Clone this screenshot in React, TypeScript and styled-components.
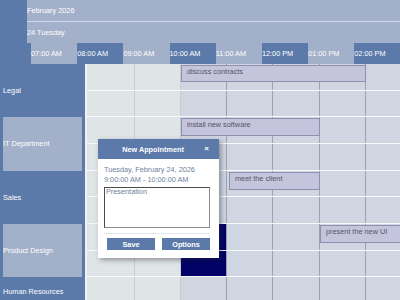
import React from "react";
import styled, { createGlobalStyle } from "styled-components";

const DARK = "#5b7aa9";
const LIGHT = "#a3b0c9";
const FONT = `"Liberation Sans", Arial, sans-serif`;

const Global = createGlobalStyle`
  html, body { margin: 0; padding: 0; background: #ffffff; }
  body { font-family: ${FONT}; }
  * { box-sizing: border-box; }
`;

const Scheduler = styled.div`
  position: relative;
  width: 400px;
  height: 300px;
  overflow: hidden;
  font-family: ${FONT};
  font-size: 7.3px;
  background: ${DARK};
  color: #ffffff;
`;

const Header = styled.div`
  display: flex;
  flex-direction: column;
`;

const HeaderRow = styled.div`
  display: flex;
  padding-left: 27px;
  background: ${DARK};
`;

const HeaderLabel = styled.div<{ $line?: boolean }>`
  flex: 1;
  display: flex;
  align-items: center;
  height: ${(p) => (p.$line ? "22px" : "21px")};
  background: ${LIGHT};
  border-bottom: ${(p) => (p.$line ? "1px solid #d3dbe7" : "none")};
  white-space: nowrap;
`;

const TimeRow = styled.div`
  display: flex;
  height: 21px;
  padding-left: 31px;
  background: ${DARK};
`;

const TimeCell = styled.div<{ $alt: boolean }>`
  flex: 0 0 46.2px;
  display: flex;
  align-items: center;
  background: ${(p) => (p.$alt ? LIGHT : DARK)};
  white-space: nowrap;
  overflow: hidden;
`;

const Body = styled.div`
  display: flex;
  height: 236px;
  overflow: hidden;
`;

const ResourceCol = styled.div`
  flex: 0 0 85px;
  display: flex;
  flex-direction: column;
  overflow: hidden;
`;

const Resource = styled.div<{ $alt: boolean; $h: number }>`
  flex: 0 0 ${(p) => p.$h}px;
  display: flex;
  align-items: center;
  margin: ${(p) => (p.$alt ? "0 3px" : "0")};
  padding-left: ${(p) => (p.$alt ? "0" : "3px")};
  background: ${(p) => (p.$alt ? LIGHT : "transparent")};
  white-space: nowrap;
`;

const Grid = styled.div`
  position: relative;
  flex: 1;
  overflow: hidden;
  border-left: 2px solid #eef2f2;
  background: #cfd5e1;
`;

const GridRow = styled.div`
  display: flex;
  height: 26.67px;
  border-bottom: 1px solid #f6f8fa;
`;

const Cell = styled.div<{ $w: number; $light: boolean; $sel: boolean }>`
  flex: 0 0 ${(p) => p.$w}px;
  border-right: 1px solid ${(p) => (p.$light ? "#c6cdce" : "#9ba1ad")};
  background: ${(p) => (p.$sel ? "#000066" : p.$light ? "#dfe5e6" : "#cfd5e1")};
`;

const Event = styled.div`
  position: absolute;
  display: flex;
  align-items: flex-start;
  padding: 1px 0 0 5px;
  background: #c4c4dd;
  border: 1px solid #8f8fb2;
  color: #555565;
  white-space: nowrap;
  overflow: hidden;
  line-height: 9px;
`;

const Popup = styled.div`
  position: absolute;
  left: 98px;
  top: 139px;
  width: 121px;
  background: #ffffff;
  box-shadow: 2px 2px 5px rgba(40, 40, 60, 0.45);
`;

const PopupTitle = styled.div`
  position: relative;
  height: 20px;
  display: flex;
  align-items: center;
  justify-content: center;
  padding-right: 11px;
  background: ${DARK};
  color: #ffffff;
  font-weight: bold;
`;

const Close = styled.span`
  position: absolute;
  right: 10px;
  top: 5px;
  font-size: 8px;
  font-weight: bold;
  line-height: 9px;
`;

const PopupBody = styled.div`
  padding: 6px 9px 8px 6px;
  color: #707f9c;
`;

const DateLine = styled.div`
  line-height: 9.5px;
  white-space: nowrap;
`;

const Subject = styled.textarea`
  display: block;
  margin-top: 3px;
  width: 106px;
  height: 41px;
  padding: 0 1px;
  border: 1px solid #4a4a4a;
  border-right-color: #8a8a8a;
  border-bottom-color: #8a8a8a;
  font-family: ${FONT};
  font-size: 7.3px;
  line-height: 8.5px;
  color: #707f9c;
  resize: none;
  outline: none;
  background: #ffffff;
`;

const Separator = styled.div`
  margin-top: 5px;
  height: 1px;
  background: #e6e8ec;
`;

const Buttons = styled.div`
  display: flex;
  gap: 7px;
  justify-content: center;
  margin: 4px -3px 0 0;
`;

const Button = styled.button`
  width: 48px;
  height: 12px;
  padding: 0;
  border: none;
  background: ${DARK};
  color: #ffffff;
  font-family: ${FONT};
  font-size: 7.3px;
  font-weight: bold;
`;

const times = ["07:00 AM", "08:00 AM", "09:00 AM", "10:00 AM", "11:00 AM", "12:00 PM", "01:00 PM", "02:00 PM"];
const resources = ["Legal", "IT Department", "Sales", "Product Design", "Human Resources"];
const colWidths = [48, 46, 46, 46, 47, 46, 46];

const events = [
  { text: "discuss contracts", left: 94, top: 1, width: 185, height: 17 },
  { text: "install new software", left: 94, top: 53.5, width: 139, height: 18 },
  { text: "meet the client", left: 142, top: 108, width: 91, height: 18 },
  { text: "present the new UI", left: 233, top: 161, width: 100, height: 18 },
];

export default function App() {
  const rows = Array.from({ length: 10 }, (_, i) => i);
  return (
    <>
      <Global />
      <Scheduler>
        <Header>
          <HeaderRow>
            <HeaderLabel $line>February 2026</HeaderLabel>
          </HeaderRow>
          <HeaderRow>
            <HeaderLabel>24 Tuesday</HeaderLabel>
          </HeaderRow>
          <TimeRow>
            {times.map((t, i) => (
              <TimeCell key={t} $alt={i % 2 === 0}>
                {t}
              </TimeCell>
            ))}
          </TimeRow>
        </Header>
        <Body>
          <ResourceCol>
            {resources.map((r, i) => (
              <Resource key={r} $alt={i % 2 === 1} $h={i === resources.length - 1 ? 28 : 53.33}>
                {r}
              </Resource>
            ))}
          </ResourceCol>
          <Grid>
            {rows.map((r) => (
              <GridRow key={r}>
                {colWidths.map((w, c) => (
                  <Cell key={c} $w={w} $light={c < 2} $sel={c === 2 && (r === 6 || r === 7)} />
                ))}
              </GridRow>
            ))}
            {events.map((e) => (
              <Event
                key={e.text}
                style={{ left: e.left, top: e.top, width: e.width, height: e.height }}
              >
                {e.text}
              </Event>
            ))}
          </Grid>
        </Body>
        <Popup>
          <PopupTitle>
            New Appointment
            <Close>×</Close>
          </PopupTitle>
          <PopupBody>
            <DateLine>Tuesday, February 24, 2026</DateLine>
            <DateLine>9:00:00 AM - 10:00:00 AM</DateLine>
            <Subject defaultValue="Presentation" />
            <Separator />
            <Buttons>
              <Button>Save</Button>
              <Button>Options</Button>
            </Buttons>
          </PopupBody>
        </Popup>
      </Scheduler>
    </>
  );
}
